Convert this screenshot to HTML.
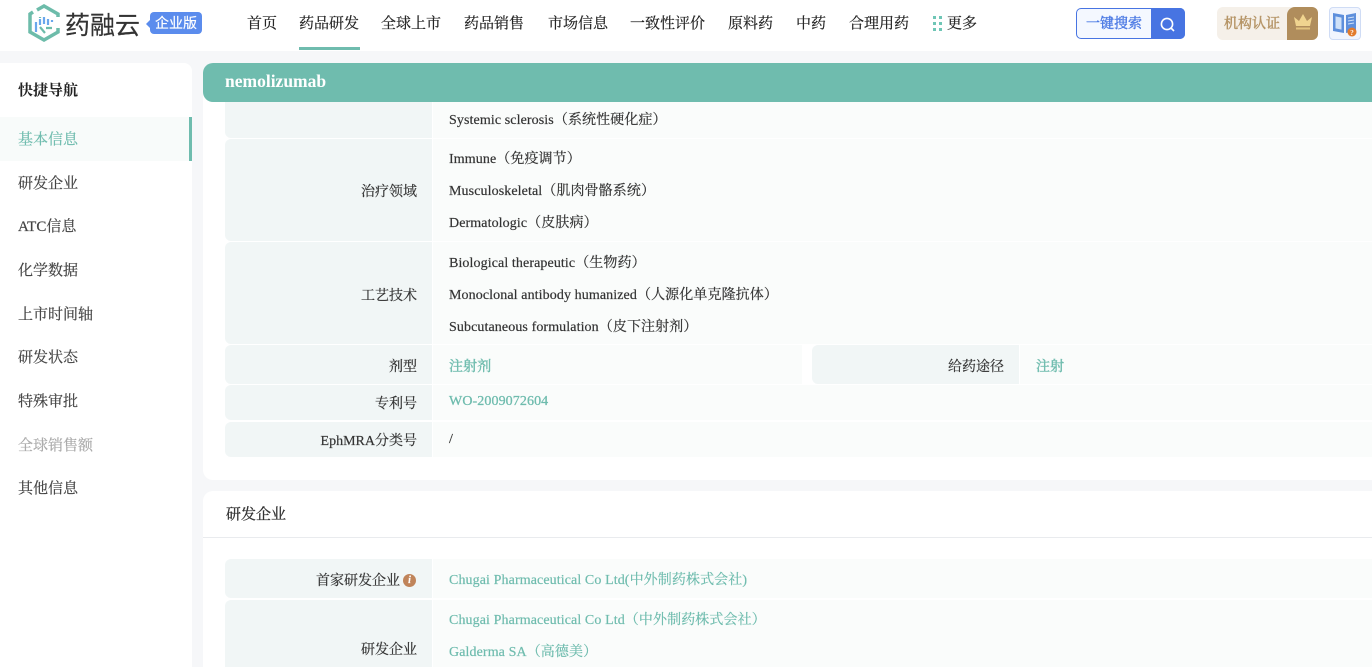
<!DOCTYPE html>
<html lang="zh"><head><meta charset="utf-8"><title>nemolizumab</title>
<style>
*{box-sizing:border-box}
html,body{margin:0;padding:0;width:1372px;height:667px;overflow:hidden;background:#f6f7f9}
body{position:relative;font-family:"Liberation Serif","Noto Serif CJK SC",serif;color:#333;-webkit-text-stroke:.2px currentColor}
div,span.a{position:absolute;white-space:nowrap}
.n{top:14px;font-size:15px;line-height:20px;color:#222}
.s{left:18px;font-size:15px;line-height:20px;color:#444}
.l{left:225px;width:207px;background:#f1f6f6;border-radius:6px 0 0 6px}
.v{left:433px;width:939px;background:#fafcfb}
.lt{font-size:14px;line-height:20px;color:#333;text-align:right;margin-top:1px}
.t{left:449px;font-size:14px;line-height:20px;color:#333;letter-spacing:.1px;margin-top:1px}
.g{color:#6fbcae}
.g2{color:#6fbcae}
</style></head><body>
<div style="left:0;top:0;width:1372px;height:51px;background:#fff"></div>
<svg style="position:absolute;left:27px;top:4px" width="34" height="38" viewBox="0 0 34 38">
<path d="M10 6 L17 2 L31 10 V13 M31 24 V28 L17 36 L3 28 V10 L6 8" fill="none" stroke="#6dbcaa" stroke-width="3.5"/>
<g stroke-width="2.2" fill="none"><path d="M9 18v10M13 15v6M17 13v7M21 15v6M25 16v2" stroke="#6aa7ec"/><path d="M13 23l5 6M19 24h6M13 13v1" stroke="#6dbcaa"/></g></svg>
<div style="left:65px;top:7px;font-family:'Noto Sans CJK SC',sans-serif;font-size:25px;line-height:34px;color:#333">药融云</div>
<div style="left:150px;top:12px;width:52px;height:22px;background:#5b8ced;border-radius:4px;color:#fff;font-family:'Noto Sans CJK SC',sans-serif;font-size:14px;line-height:22px;text-align:center">企业版</div>
<div style="left:146px;top:20px;border:4px solid transparent;border-right-color:#5b8ced;border-left:0"></div>

<div class="n" style="left:247px">首页</div>
<div class="n" style="left:299px">药品研发</div>
<div style="left:299px;top:47px;width:61px;height:3px;background:#6fbcae"></div>
<div class="n" style="left:381px">全球上市</div>
<div class="n" style="left:464px">药品销售</div>
<div class="n" style="left:548px">市场信息</div>
<div class="n" style="left:630px">一致性评价</div>
<div class="n" style="left:728px">原料药</div>
<div class="n" style="left:796px">中药</div>
<div class="n" style="left:849px">合理用药</div>
<svg style="position:absolute;left:933px;top:16px" width="10" height="16" fill="#6fc6b6"><rect x="0" y="0" width="3" height="3"/><rect x="6" y="0" width="3" height="3"/><rect x="0" y="6" width="3" height="3"/><rect x="6" y="6" width="3" height="3"/><rect x="0" y="12" width="3" height="3"/><rect x="6" y="12" width="3" height="3"/></svg>
<div class="n" style="left:947px">更多</div>

<div style="left:1076px;top:8px;width:109px;height:31px;border:1px solid #4774e2;border-radius:5px;background:#f4f8ff"></div>
<div style="left:1151px;top:8px;width:34px;height:31px;background:#4774e2;border-radius:0 5px 5px 0"></div>
<div style="left:1086px;top:15px;font-size:14px;line-height:20px;color:#4d7be4;-webkit-text-stroke:.4px #4d7be4">一键搜索</div>
<svg style="position:absolute;left:1159px;top:16px" width="17" height="17" fill="none" stroke="#fff" stroke-width="1.6"><circle cx="8" cy="8" r="5.600"/><path d="M12 12l3 3"/></svg>

<div style="left:1217px;top:7px;width:101px;height:33px;background:#f5f0e9;border-radius:6px"></div>
<div style="left:1224px;top:15px;font-size:14px;line-height:20px;color:#b69567;-webkit-text-stroke:.5px #b69567">机构认证</div>
<div style="left:1287px;top:7px;width:31px;height:33px;background:#b08d5c;border-radius:8px 6px 6px 0"></div>
<svg style="position:absolute;left:1293px;top:12px" width="20" height="20"><path d="M1 5l5 4 4-7 4 7 5-4-2 9H3z" fill="#f0d48f"/><rect x="3" y="15.500" width="14" height="2" fill="#e2c27e"/></svg>
<div style="left:1329px;top:7px;width:32px;height:33px;background:#f1f5fe;border:1px solid #cfdcf5;border-radius:4px"></div>
<svg style="position:absolute;left:1333px;top:12px" width="26" height="26"><path d="M0 1l11 2v18L0 19z" fill="#5e8fdc"/><path d="M13 3l10-2v18l-10 2z" fill="#5e8fdc"/><path d="M3 5l5 1v11l-5-1zM15 6l6-1M15 9l6-1M15 12l6-1" fill="#cfe0f7" stroke="#cfe0f7"/><circle cx="19" cy="20" r="4.500" fill="#e27b2c"/><text x="19" y="23" font-size="7" fill="#fff" text-anchor="middle" font-weight="bold">?</text></svg>

<div style="left:0;top:63px;width:192px;height:604px;background:#fff;border-radius:0 8px 0 0"></div>
<div style="left:18px;top:81px;font-size:15px;line-height:20px;color:#222;font-weight:bold;-webkit-text-stroke:0">快捷导航</div>
<div style="left:0;top:117px;width:192px;height:44px;background:#f8fbfa"></div>
<div style="left:189px;top:117px;width:3px;height:44px;background:#6fbcae"></div>
<div class="s" style="top:130px;color:#6fbcae">基本信息</div>
<div class="s" style="top:174px">研发企业</div>
<div class="s" style="top:217px">ATC信息</div>
<div class="s" style="top:261px">化学数据</div>
<div class="s" style="top:305px">上市时间轴</div>
<div class="s" style="top:348px">研发状态</div>
<div class="s" style="top:392px">特殊审批</div>
<div class="s" style="top:436px;color:#aaa">全球销售额</div>
<div class="s" style="top:479px">其他信息</div>

<div style="left:203px;top:63px;width:1169px;height:417px;background:#fff;border-radius:10px 0 0 10px"></div>
<div style="left:203px;top:63px;width:1169px;height:39px;background:#6fbcae;border-radius:10px 0 0 10px"></div>
<div style="left:225px;top:71px;font-size:17.500px;line-height:20px;font-weight:bold;color:#fff;-webkit-text-stroke:0">nemolizumab</div>

<div class="l" style="top:102px;height:36px;border-radius:0 0 0 6px"></div><div class="v" style="top:102px;height:36px"></div>
<div class="t" style="top:110px">Systemic sclerosis（系统性硬化症）</div>

<div class="l" style="top:139px;height:102px"></div><div class="v" style="top:139px;height:102px"></div>
<div class="lt" style="left:225px;width:192px;top:182px">治疗领域</div>
<div class="t" style="top:149px">Immune（免疫调节）</div>
<div class="t" style="top:181px">Musculoskeletal（肌肉骨骼系统）</div>
<div class="t" style="top:213px">Dermatologic（皮肤病）</div>

<div class="l" style="top:242px;height:102px"></div><div class="v" style="top:242px;height:102px"></div>
<div class="lt" style="left:225px;width:192px;top:286px">工艺技术</div>
<div class="t" style="top:253px">Biological therapeutic（生物药）</div>
<div class="t" style="top:285px">Monoclonal antibody humanized（人源化单克隆抗体）</div>
<div class="t" style="top:317px">Subcutaneous formulation（皮下注射剂）</div>

<div class="l" style="top:345px;height:39px"></div><div class="v" style="top:345px;height:39px;width:369px"></div>
<div class="lt" style="left:225px;width:192px;top:357px">剂型</div>
<div class="t g" style="top:357px;-webkit-text-stroke:.4px #6fbcae">注射剂</div>
<div class="l" style="left:812px;top:345px;height:39px"></div><div class="v" style="left:1020px;top:345px;height:39px;width:352px"></div>
<div class="lt" style="left:812px;width:192px;top:357px">给药途径</div>
<div class="t g" style="left:1036px;top:357px;-webkit-text-stroke:.4px #6fbcae">注射</div>

<div class="l" style="top:385px;height:35px"></div><div class="v" style="top:385px;height:35px"></div>
<div class="lt" style="left:225px;width:192px;top:394px">专利号</div>
<div class="t g" style="top:391px;-webkit-text-stroke:.3px #6fbcae">WO-2009072604</div>

<div class="l" style="top:422px;height:35px"></div><div class="v" style="top:422px;height:35px"></div>
<div class="lt" style="left:225px;width:192px;top:431px">EphMRA分类号</div>
<div class="t" style="top:429px">/</div>

<div style="left:203px;top:491px;width:1169px;height:176px;background:#fff;border-radius:10px 0 0 0"></div>
<div style="left:203px;top:537px;width:1169px;height:1px;background:#e9ebee"></div>
<div style="left:226px;top:505px;font-size:15px;line-height:20px;color:#333;-webkit-text-stroke:.3px #333">研发企业</div>

<div class="l" style="top:559px;height:39px"></div><div class="v" style="top:559px;height:39px"></div>
<div class="lt" style="left:225px;width:175px;top:571px">首家研发企业</div>
<div style="left:403px;top:574px;width:13px;height:13px;border-radius:50%;background:#c0845a;color:#fff;font-size:10px;line-height:13px;text-align:center;font-style:italic;font-weight:bold">i</div>
<div class="t g2" style="top:570px">Chugai Pharmaceutical Co Ltd(中外制药株式会社)</div>

<div class="l" style="top:600px;height:67px;border-radius:6px 0 0 0"></div><div class="v" style="top:600px;height:67px"></div>
<div class="lt" style="left:225px;width:192px;top:640px">研发企业</div>
<div class="t g2" style="top:610px">Chugai Pharmaceutical Co Ltd（中外制药株式会社）</div>
<div class="t g2" style="top:642px">Galderma SA（高德美）</div>
</body></html>
